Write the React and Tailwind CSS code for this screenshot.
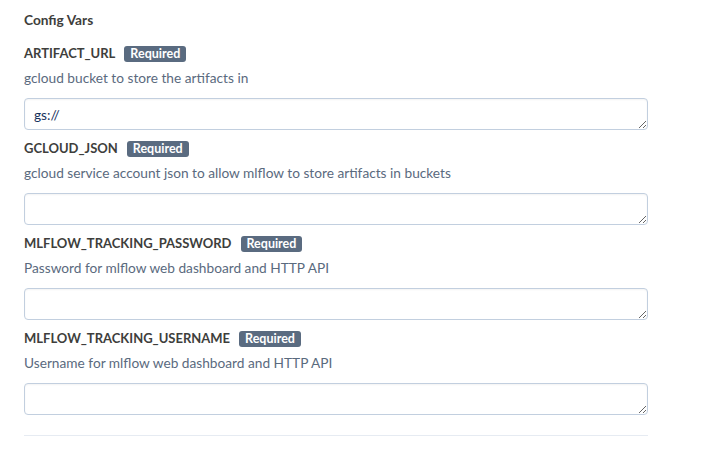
import React from "react";

const fields = [
  { name: "ARTIFACT_URL", desc: "gcloud bucket to store the artifacts in", value: "gs://" },
  { name: "GCLOUD_JSON", desc: "gcloud service account json to allow mlflow to store artifacts in buckets", value: "" },
  { name: "MLFLOW_TRACKING_PASSWORD", desc: "Password for mlflow web dashboard and HTTP API", value: "" },
  { name: "MLFLOW_TRACKING_USERNAME", desc: "Username for mlflow web dashboard and HTTP API", value: "" },
];

function ConfigField({ name, desc, value }) {
  return (
    <div className="mt-[9px] first:mt-0">
      {/* Label with badge */}
      <div className="flex h-5 items-center gap-[9px]">
        <span className="text-[13px] font-bold text-[#3e3e3c]">{name}</span>
        <span className="rounded-[3px] bg-[#5a6b80] px-[6px] text-[12.5px] font-bold leading-4 text-white">
          Required
        </span>
      </div>
      <p className="mt-1 text-[13.7px] leading-5 text-[#5a6a7e]">{desc}</p>
      <textarea
        rows={1}
        defaultValue={value}
        className="mt-[10px] block h-8 w-[624px] rounded-[4px] border border-[#c2cfdf] bg-white px-[9px] py-[6px] text-[13.7px] leading-5 text-[#16325c] shadow-[inset_0_1px_2px_rgba(0,0,0,0.05)] outline-none"
      />
    </div>
  );
}

export default function App() {
  return (
    <div className="min-h-[453px] bg-white px-6 pt-[10px] font-['Lato','Open_Sans',sans-serif]">
      <h3 className="h-5 text-[13.7px] font-bold leading-5 text-[#3e3e3c]">Config Vars</h3>
      <div className="mt-[14px]">
        {fields.map((f) => (
          <ConfigField key={f.name} {...f} />
        ))}
      </div>
      {/* Bottom divider */}
      <div className="mt-5 h-px w-[624px] bg-[#e6ebf2]" />
    </div>
  );
}
